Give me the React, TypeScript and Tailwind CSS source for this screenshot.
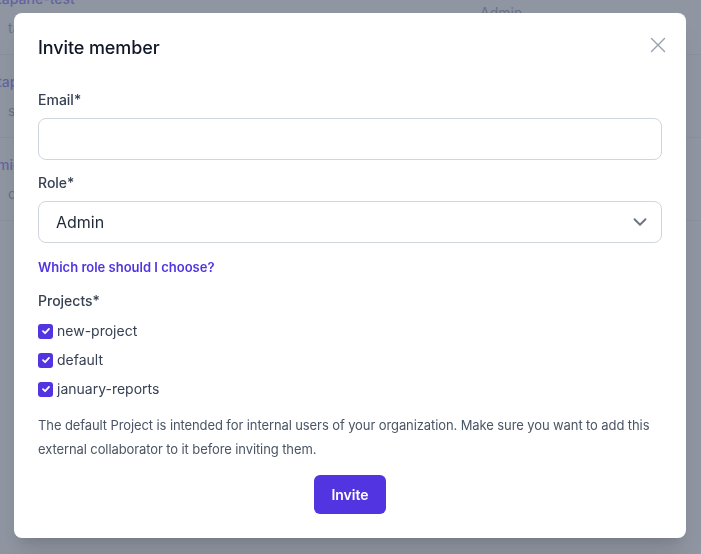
import { ChevronDown } from "lucide-react";

const members = [
  { name: "tapane-test", email: "tapane.test@example.com", role: "Admin" },
  { name: "tapane-staging", email: "staging@tapane.io", role: "Member" },
  { name: "michael-ross", email: "cloud@michaelross.dev", role: "Member" },
];

const projects = ["new-project", "default", "january-reports"];

function Check() {
  return (
    <span className="flex h-[15px] w-[15px] shrink-0 items-center justify-center rounded-[3px] bg-[#5235e0]">
      <svg width="10" height="10" viewBox="0 0 10 10" fill="none">
        <path d="M2 5.2 4.1 7.2 8 2.9" stroke="white" strokeWidth="1.8" strokeLinecap="round" strokeLinejoin="round" />
      </svg>
    </span>
  );
}

export default function App() {
  return (
    <div className="relative h-[554px] w-[701px] overflow-hidden bg-white font-['Inter',sans-serif]">
      {/* page behind the dialog */}
      <div className="-mt-[28px]">
        {members.map((m) => (
          <div key={m.name} className="flex h-[83px] items-center border-b border-gray-200">
            <div className="w-[470px]">
              <div className="-ml-[3px] text-sm leading-5 font-medium text-indigo-600">{m.name}</div>
              <div className="mt-[9px] pl-[8px] text-sm leading-5 text-gray-500">{m.email}</div>
            </div>
            <div className="pl-[10px] text-sm text-gray-500">{m.role}</div>
          </div>
        ))}
      </div>

      {/* overlay + dialog */}
      <div className="fixed inset-0 flex bg-gray-500/75 pt-[13px] pl-[14px]">
        <div className="h-fit w-[672px] rounded-lg bg-white px-6 pt-[21px] pb-6 shadow-xl">
          <div className="flex items-start justify-between">
            <h2 className="text-lg leading-7 font-medium tracking-[-0.1px] text-gray-900">Invite member</h2>
            <button className="-mr-[4px] mt-[3px] text-gray-400" aria-label="Close">
              <svg width="16" height="16" viewBox="0 0 16 16" fill="none">
                <path d="M1.5 1.5l13 13M14.5 1.5l-13 13" stroke="currentColor" strokeWidth="1.4" strokeLinecap="round" />
              </svg>
            </button>
          </div>

          <label className="mt-[28px] block text-sm leading-5 font-medium text-gray-700">Email*</label>
          <input className="mt-2 block h-[42px] w-full rounded-lg border border-gray-300 px-4 text-base outline-none" />

          <label className="mt-[13px] block text-sm leading-5 font-medium text-gray-700">Role*</label>
          <div className="mt-2 flex h-[42px] items-center justify-between rounded-lg border border-gray-300 pr-[10px] pl-[17px]">
            <span className="text-base text-gray-800">Admin</span>
            <ChevronDown size={22} strokeWidth={2} className="text-gray-500" />
          </div>

          <a className="mt-[14px] block text-[13px] leading-5 font-semibold text-[#5235e0]">Which role should I choose?</a>

          <div className="mt-[14px] text-sm leading-5 font-medium text-gray-700">Projects*</div>
          <div className="mt-[10px] flex flex-col gap-[9px]">
            {projects.map((p) => (
              <div key={p} className="flex h-5 items-center gap-1">
                <Check />
                <span className="text-sm leading-5 text-gray-700">{p}</span>
              </div>
            ))}
          </div>

          <p className="mt-[14px] text-[13px] leading-6 tracking-[-0.1px] text-gray-600">
            The default Project is intended for internal users of your organization. Make sure you want to add this
            external collaborator to it before inviting them.
          </p>

          <div className="mt-[14px] flex justify-center">
            <button className="h-[39px] rounded-md bg-[#5235e0] px-[17px] text-sm font-semibold text-white">Invite</button>
          </div>
        </div>
      </div>
    </div>
  );
}
